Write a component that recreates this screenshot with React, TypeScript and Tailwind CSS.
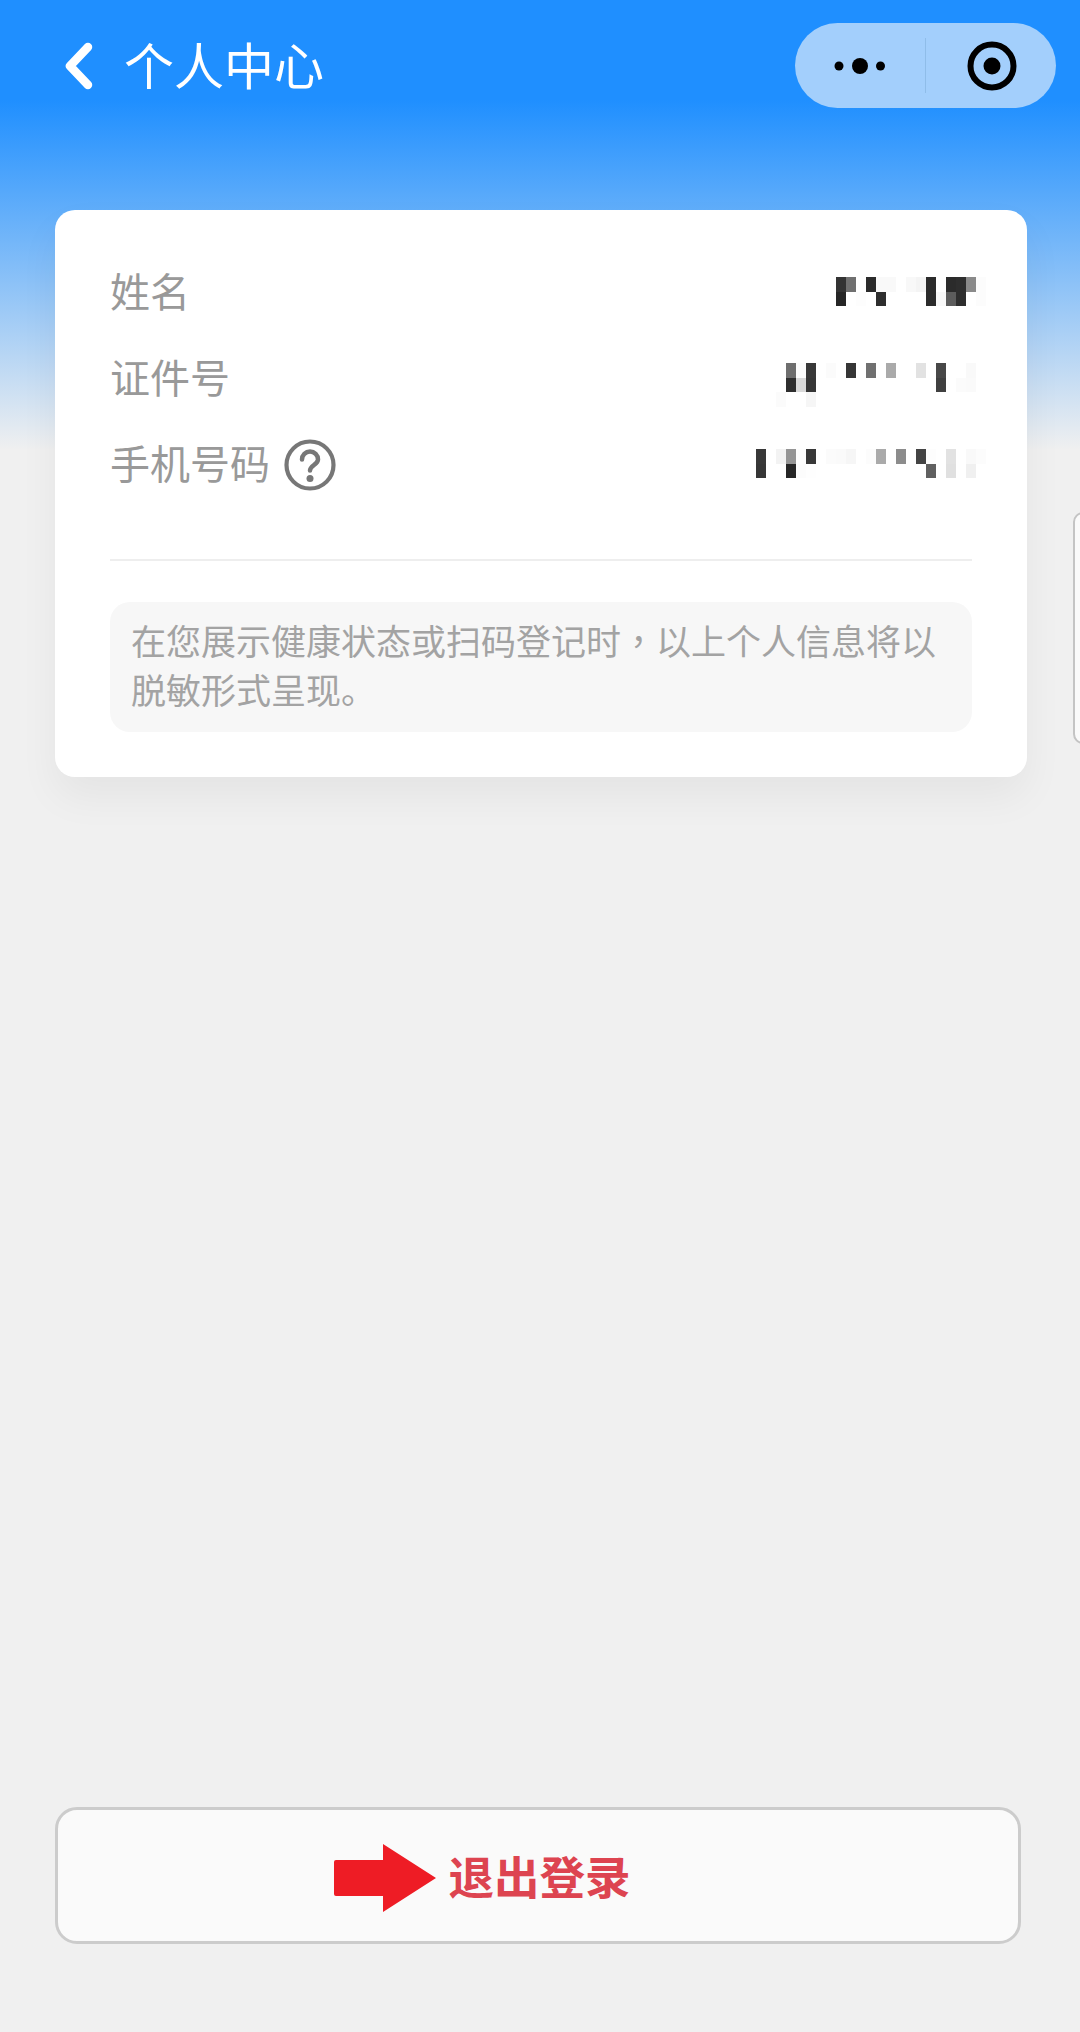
import { ReactNode } from "react";

const CELL_W = 10;
const CELL_H = 14.5;

// blurred-out values, one grey per mosaic cell ("" = nothing drawn)
const nameCells = [
  ["#333", "#707070", "", "#2b2b2b", "#f9f9f9", "#f9f9f9", "", "#f8f8f8", "#f4f4f4", "#2b2b2b", "", "#2b2b2b", "#2e2e2e", "#8a8a8a", "#fcfcfc"],
  ["#262626", "", "#fdfdfd", "", "#2e2e2e", "", "", "", "", "#2b2b2b", "#f8f8f8", "#5c5c5c", "#2e2e2e", "", "#fcfcfc"],
];
const idCells = [
  ["", "#6e6e6e", "#fcfcfc", "#383838", "", "#fbfbfb", "", "#363636", "", "#707070", "", "#aaa", "", "", "#e2e2e2", "", "#484848", "", "", "#f9f9f9", ""],
  ["", "#2e2e2e", "#d9d9d9", "#363636", "", "", "", "", "", "", "", "", "", "", "", "", "#404040", "", "#fbfbfb", "#fafafa", ""],
  ["#fbfbfb", "", "", "#f6f6f6", "", "", "", "", "", "", "", "", "", "", "", "", "", "", "", "", ""],
];
const phoneCells = [
  ["", "#383838", "", "#f3f3f3", "#959595", "#fdfdfd", "#383838", "", "#fbfbfb", "#fafafa", "#f6f6f6", "", "#fcfcfc", "#aaa", "", "#8c8c8c", "", "#444", "#fdfdfd", "", "#e2e2e2", "", "#f9f9f9", "#fcfcfc"],
  ["", "#363636", "", "", "#262626", "#fcfcfc", "#fefefe", "", "", "", "", "", "", "", "", "", "", "", "#606060", "", "#e0e0e0", "", "#f0f0f0", ""],
];

function Mosaic({ cells }: { cells: string[][] }) {
  const w = cells[0].length * CELL_W;
  const h = cells.length * CELL_H;
  return (
    <svg width={w} height={h} shapeRendering="crispEdges" className="mt-[27px] -mr-[14px] self-start">
      {cells.map((row, y) =>
        row.map((fill, x) =>
          fill ? (
            <rect key={`${x}-${y}`} x={x * CELL_W} y={y * CELL_H} width={CELL_W} height={CELL_H} fill={fill} />
          ) : null
        )
      )}
    </svg>
  );
}

function InfoRow({ label, extra, cells }: { label: string; extra?: ReactNode; cells: string[][] }) {
  return (
    <div className="flex h-[86px] items-center justify-between">
      <div className="flex items-center gap-[14px]">
        <span className="pb-[7px] text-[40px] text-[#999999]">{label}</span>
        {extra}
      </div>
      <Mosaic cells={cells} />
    </div>
  );
}

function HelpIcon() {
  return (
    <svg width="52" height="52" viewBox="0 0 52 52" fill="none" stroke="#777777" strokeWidth="4.2">
      <circle cx="26" cy="26" r="23.5" />
      <path d="M18 20.5a8 8 0 0 1 16 0c0 5-8 6-8 11" strokeWidth="4.5" strokeLinecap="round" />
      <circle cx="26" cy="39.5" r="3.5" fill="#777777" stroke="none" />
    </svg>
  );
}

function Capsule() {
  return (
    <div className="flex h-[85px] w-[261px] items-center rounded-full bg-[#a3cffc]">
      <div className="flex w-[130px] items-center justify-center pl-[2px]">
        <svg width="56" height="20" viewBox="0 0 56 20" fill="#000000">
          <circle cx="6" cy="10" r="4.5" />
          <circle cx="27" cy="10" r="8" />
          <circle cx="47.5" cy="10" r="4.5" />
        </svg>
      </div>
      <div className="h-[55px] w-px bg-[#8fbde9]" />
      <div className="flex flex-1 items-center justify-center pt-[1px] pl-[1px]">
        <svg width="50" height="50" viewBox="0 0 50 50">
          <circle cx="25" cy="25" r="21.5" fill="none" stroke="#000000" strokeWidth="6" />
          <circle cx="25" cy="25" r="8.5" fill="#000000" />
        </svg>
      </div>
    </div>
  );
}

export default function App() {
  return (
    <div className="relative flex h-[2032px] w-[1080px] flex-col overflow-hidden bg-[linear-gradient(to_bottom,#1f8fff_100px,#f0f0f0_450px)] font-['Noto_Sans_CJK_SC','Noto_Sans',sans-serif]">
      <header className="flex h-[210px] items-start justify-between pt-[23px] pr-[24px] pl-[62px]">
        <div className="flex h-[85px] items-center gap-[28px]">
          <svg width="34" height="48" viewBox="0 0 34 48" fill="none" stroke="#ffffff" strokeWidth="8.5" strokeLinecap="round" strokeLinejoin="round">
            <path d="M26 5 8 24l18 19" />
          </svg>
          <h1 className="pb-[5px] text-[50px] leading-none font-normal text-white">个人中心</h1>
        </div>
        <Capsule />
      </header>

      <section className="mr-[53px] ml-[55px] rounded-[20px] bg-white px-[55px] pt-[40px] pb-[45px] shadow-[0_20px_40px_rgba(0,0,0,0.05)]">
        <InfoRow label="姓名" cells={nameCells} />
        <InfoRow label="证件号" cells={idCells} />
        <InfoRow label="手机号码" extra={<HelpIcon />} cells={phoneCells} />
        <div className="mt-[51px] h-[2px] bg-[#eeeeee]" />
        <p className="mt-[41px] rounded-[20px] bg-[#f7f7f7] px-[21px] pt-[13px] pb-[19px] text-[35px] leading-[49px] text-[#a3a3a3]">
          在您展示健康状态或扫码登记时<span className="font-['Noto_Sans_CJK_TC',sans-serif]">，</span>以上个人信息将以
          <br />
          脱敏形式呈现。
        </p>
      </section>

      {/* side tab peeking in from the right edge */}
      <div className="absolute top-[512px] left-[1073px] h-[232px] w-[20px] rounded-[10px] border-2 border-[#c4c4c4] bg-[#fafafa]" />

      <div className="flex-1" />

      <button className="mr-[59px] mb-[88px] ml-[55px] flex h-[137px] items-center justify-center rounded-[22px] border-[3px] border-[#cccccc] bg-[#fafafa]">
        <span className="relative ml-[3px] text-[45.5px] leading-none font-bold text-[#dd4450]">
          退出登录
          <svg width="102" height="68" viewBox="0 0 102 68" className="absolute top-1/2 right-full mt-[2px] mr-[12px] -translate-y-1/2" fill="#ee1c25">
            <path d="M2 16h47V0l53 34-53 34V52H2a2 2 0 0 1-2-2V18a2 2 0 0 1 2-2z" />
          </svg>
        </span>
      </button>
    </div>
  );
}
